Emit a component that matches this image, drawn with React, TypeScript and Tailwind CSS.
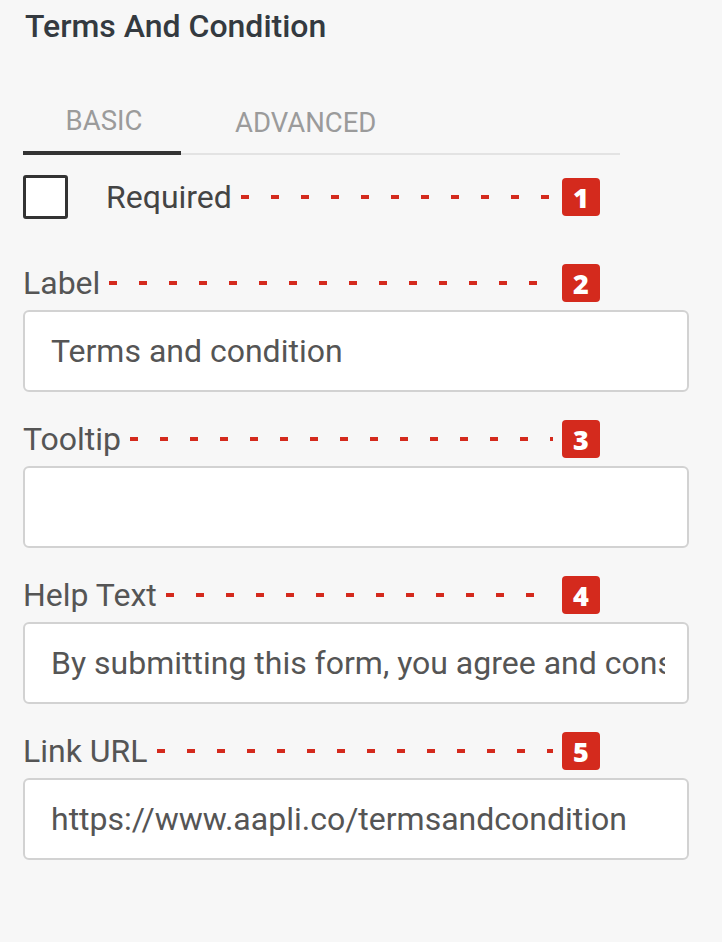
import React from "react";

function Badge({ n }: { n: number }) {
  return (
    <div className="w-[38px] h-[38px] shrink-0 rounded-[4px] bg-[#d42a1d] flex items-center justify-center text-white text-[27px] font-extrabold leading-none font-['Open_Sans',sans-serif]">
      {n}
    </div>
  );
}

function Leader() {
  return (
    <div className="flex-1 h-[4px] mx-[9px] bg-[repeating-linear-gradient(to_right,#d42a1d_0_8px,transparent_8px_30px)]" />
  );
}

function Field({ label, n, value }: { label: string; n: number; value?: string }) {
  return (
    <div className="mb-[28px]">
      <div className="flex items-center h-[38px] w-[577px]">
        <span className="text-[32px] text-[#555] leading-none">{label}</span>
        <Leader />
        <Badge n={n} />
      </div>
      <div className="mt-[8px] h-[82px] w-[666px] bg-white border-2 border-[#d2d2d2] rounded-[6px] pl-[26px] pr-[22px] flex items-center">
        <div className="overflow-hidden whitespace-nowrap text-[32px] text-[#555] leading-none py-1">
          {value}
        </div>
      </div>
    </div>
  );
}

export default function App() {
  return (
    <div className="w-[722px] h-[942px] bg-[#f7f7f7] pl-[23px] font-['Roboto',sans-serif]">
      <div className="h-[48px] pt-[2px] leading-[48px] text-[32px] font-medium text-[#343a40] pl-[2px]">
        Terms And Condition
      </div>

      <div className="mt-[42px] flex w-[597px] border-b-2 border-[#e3e3e3]">
        <div className="-mb-[2px] w-[158px] h-[65px] pl-[4px] border-b-4 border-[#333] flex items-center justify-center text-[27.5px] text-[#9b9b9b]">
          BASIC
        </div>
        <div className="-mb-[2px] h-[65px] pl-[54px] flex items-center text-[27.5px] text-[#9b9b9b]">
          ADVANCED
        </div>
      </div>

      <div className="mt-[20px] flex items-center h-[44px] w-[577px]">
        <div className="w-[45px] h-[44px] shrink-0 border-[3px] border-[#333] rounded-[3px] bg-white" />
        <span className="ml-[38px] text-[32px] text-[#444] leading-none">Required</span>
        <Leader />
        <Badge n={1} />
      </div>

      <div className="mt-[45px]">
        <Field label="Label" n={2} value="Terms and condition" />
        <Field label="Tooltip" n={3} />
        <Field label="Help Text" n={4} value="By submitting this form, you agree and consent to our terms and conditions" />
        <Field label="Link URL" n={5} value="https://www.aapli.co/termsandcondition" />
      </div>
    </div>
  );
}
